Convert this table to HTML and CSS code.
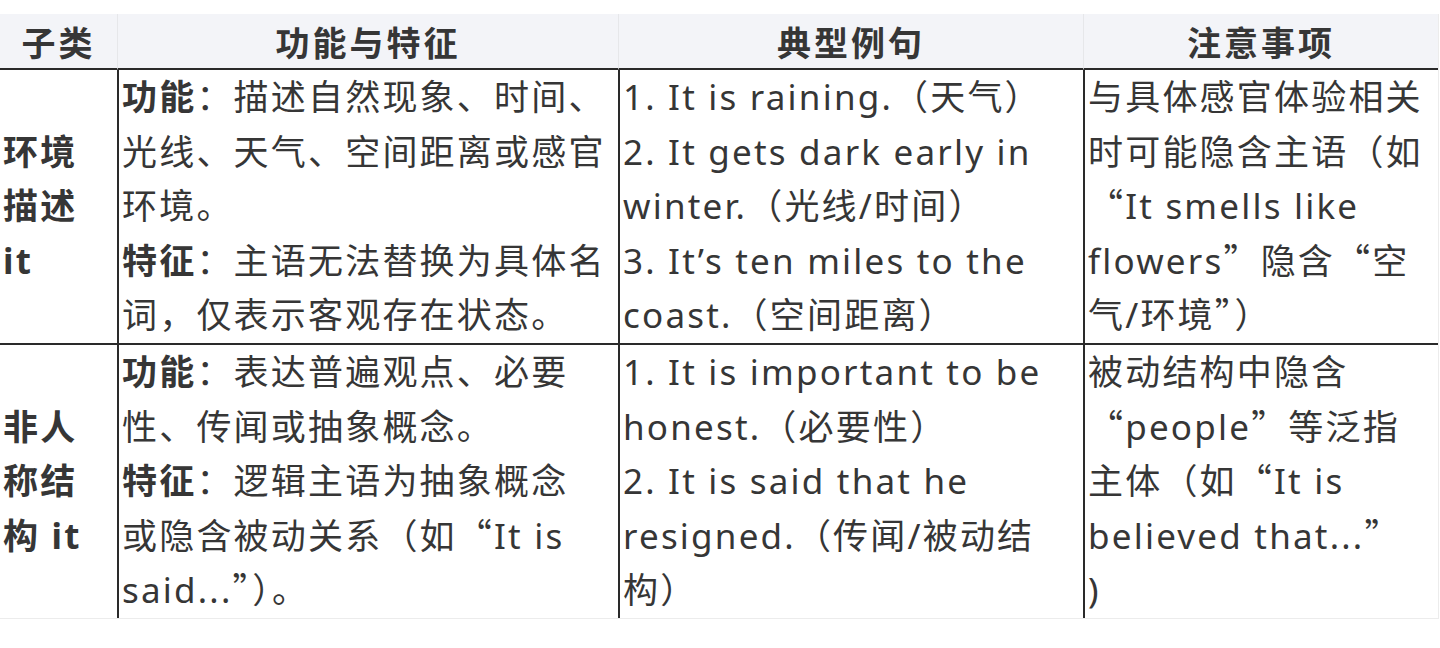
FILE: index.html
```html
<!DOCTYPE html>
<html lang="zh">
<head>
<meta charset="utf-8">
<title>it 的用法</title>
<link rel="stylesheet" href="styles.css">
</head>
<body>
<div class="table">
  <div class="th c1">子类</div>
  <div class="th">功能与特征</div>
  <div class="th">典型例句</div>
  <div class="th last">注意事项</div>

  <div class="td sub row1">环境<br>描述<br>it</div>
  <div class="td sep row1"><b>功能</b>：描述自然现象、时间、<br>光线、天气、空间距离或感官<br>环境。<br><b>特征</b>：主语无法替换为具体名<br>词，仅表示客观存在状态。</div>
  <div class="td sep row1">1. It is raining.（天气）<br>2. It gets dark early in<br>winter.（光线/时间）<br>3. It’s ten miles to the<br>coast.（空间距离）</div>
  <div class="td sep row1 last">与具体感官体验相关<br>时可能隐含主语（如<br><span class="q">“</span>It smells like<br>flowers<span class="q">”</span>隐含<span class="q">“</span>空<br>气/环境<span class="q">”</span>）</div>

  <div class="td sub row2">非人<br>称结<br>构 it</div>
  <div class="td sep row2"><b>功能</b>：表达普遍观点、必要<br>性、传闻或抽象概念。<br><b>特征</b>：逻辑主语为抽象概念<br>或隐含被动关系（如<span class="q">“</span>It is<br>said...<span class="q">”</span>）。</div>
  <div class="td sep row2">1. It is important to be<br>honest.（必要性）<br>2. It is said that he<br>resigned.（传闻/被动结<br>构）</div>
  <div class="td sep row2 last">被动结构中隐含<br><span class="q">“</span>people<span class="q">”</span>等泛指<br>主体（如<span class="q">“</span>It is<br>believed that...<span class="q">”</span><br>)</div>
</div>
</body>
</html>
```

FILE: styles.css
```css
html, body {
  margin: 0;
  padding: 0;
  background: #ffffff;
}

body {
  padding-top: 14px;
  font-family: "Noto Sans", "Noto Sans CJK SC", sans-serif;
  color: #363636;
}

.table {
  display: grid;
  grid-template-columns: 117px 501px 465px 355px;
  grid-template-rows: 56px 275px 273px;
  width: 1438px;
  border-right: 1px solid #ececec;
  border-bottom: 1px solid #ececec;
}

.th {
  background: #f3f4f8;
  border-bottom: 2px solid #2a2a2a;
  border-left: 1px solid #e6e7ea;
  font-size: 34px;
  font-weight: 700;
  letter-spacing: 3px;
  display: flex;
  align-items: center;
  justify-content: center;
  white-space: nowrap;
}

.th.c1 {
  border-left: none;
}

.td {
  font-size: 35px;
  line-height: 54.6px;
  letter-spacing: 2.2px;
  padding: 0 0 0 3px;
  white-space: nowrap;
  overflow: hidden;
}

.td b {
  font-weight: 700;
}

.q {
  font-family: "Noto Sans CJK SC", sans-serif;
  line-height: 1;
}

.row1 {
  border-bottom: 2px solid #2a2a2a;
}

.sub {
  font-weight: 700;
  display: flex;
  align-items: center;
}

.sep {
  border-left: 2px solid #2a2a2a;
}
```
